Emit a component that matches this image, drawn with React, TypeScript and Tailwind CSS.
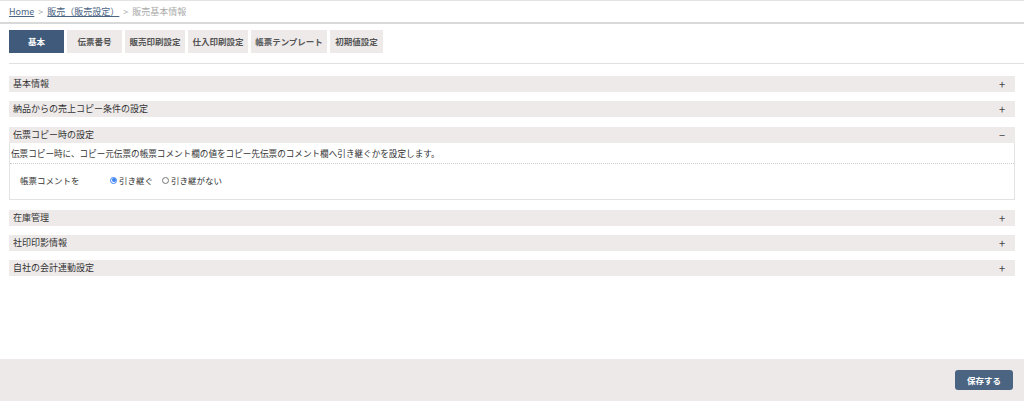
import React from "react";

const FONT = { fontFamily: '"Noto Sans CJK JP", "Noto Sans", sans-serif' };

const TABS = [
  { label: "基本", w: "w-[55px]", active: true },
  { label: "伝票番号", w: "w-[55px]" },
  { label: "販売印刷設定", w: "w-[60px]" },
  { label: "仕入印刷設定", w: "w-[60px]" },
  { label: "帳票テンプレート", w: "w-[76px]" },
  { label: "初期値設定", w: "w-[53px]" },
];

function SectionBar({ title, open }: { title: string; open?: boolean }) {
  return (
    <div className="flex h-[16px] items-center justify-between bg-[#eeeaea] pl-[4px] pr-[10px] text-[9px] text-[#333]">
      <span>{title}</span>
      <span className="text-[11px] leading-none text-[#444]">{open ? "−" : "+"}</span>
    </div>
  );
}

function Radio({ label, checked }: { label: string; checked?: boolean }) {
  return (
    <label className="flex items-center gap-[2px]">
      <span
        className={
          "flex h-[7px] w-[7px] items-center justify-center rounded-full border " +
          (checked ? "border-[#3b82f6] bg-white" : "border-[#777] bg-white")
        }
      >
        {checked && <span className="h-[4px] w-[4px] rounded-full bg-[#3b82f6]" />}
      </span>
      <span>{label}</span>
    </label>
  );
}

export default function App() {
  return (
    <div className="flex h-[401px] w-[1024px] flex-col bg-white text-[#333]" style={FONT}>
      <div className="flex-1 border-t border-[#e3e3e3]">
        <div className="flex h-[21px] items-center gap-[4px] pl-[9px] text-[9px]">
          <span className="text-[#4a6482] underline">Home</span>
          <span className="text-[#aaa]">&gt;</span>
          <span className="text-[#4a6482] underline">販売（販売設定）</span>
          <span className="text-[#aaa]">&gt;</span>
          <span className="text-[#aaa]">販売基本情報</span>
        </div>
        <div className="border-t-2 border-[#d9d9d9]" />

        <div className="ml-[9px] flex gap-[3px] pt-[6px]">
          {TABS.map((t) => (
            <div
              key={t.label}
              className={
                t.w +
                " flex h-[23px] items-center justify-center text-[8.5px] font-bold " +
                (t.active ? "bg-[#3f5a7a] text-white" : "bg-[#eeeaea] text-[#555]")
              }
            >
              {t.label}
            </div>
          ))}
        </div>
        <div className="ml-[9px] mt-[10px] border-t border-[#e0e0e0]" />

        <div className="mx-[9px] mt-[12px] flex flex-col">
          <SectionBar title="基本情報" />
          <div className="h-[9px]" />
          <SectionBar title="納品からの売上コピー条件の設定" />
          <div className="h-[10px]" />
          <SectionBar title="伝票コピー時の設定" open />
          <div className="border-x border-b border-[#e2e2e2]">
            <div className="flex h-[21px] items-center border-b border-dotted border-[#cfcfcf] pl-[1px] text-[8.6px]">
              伝票コピー時に、コピー元伝票の帳票コメント欄の値をコピー先伝票のコメント欄へ引き継ぐかを設定します。
            </div>
            <div className="flex h-[35px] items-start pt-[10px] pl-[10px] text-[8.5px]">
              <span className="w-[90px]">帳票コメントを</span>
              <div className="flex gap-[9px]">
                <Radio label="引き継ぐ" checked />
                <Radio label="引き継がない" />
              </div>
            </div>
          </div>
          <div className="h-[10px]" />
          <SectionBar title="在庫管理" />
          <div className="h-[9px]" />
          <SectionBar title="社印印影情報" />
          <div className="h-[9px]" />
          <SectionBar title="自社の会計連動設定" />
        </div>
      </div>

      <div className="flex h-[42px] items-center justify-end bg-[#ede9e8] pr-[11px]">
        <button className="h-[20px] w-[58px] rounded-[3px] bg-[#4a6482] text-[8.5px] font-bold text-white">
          保存する
        </button>
      </div>
    </div>
  );
}
